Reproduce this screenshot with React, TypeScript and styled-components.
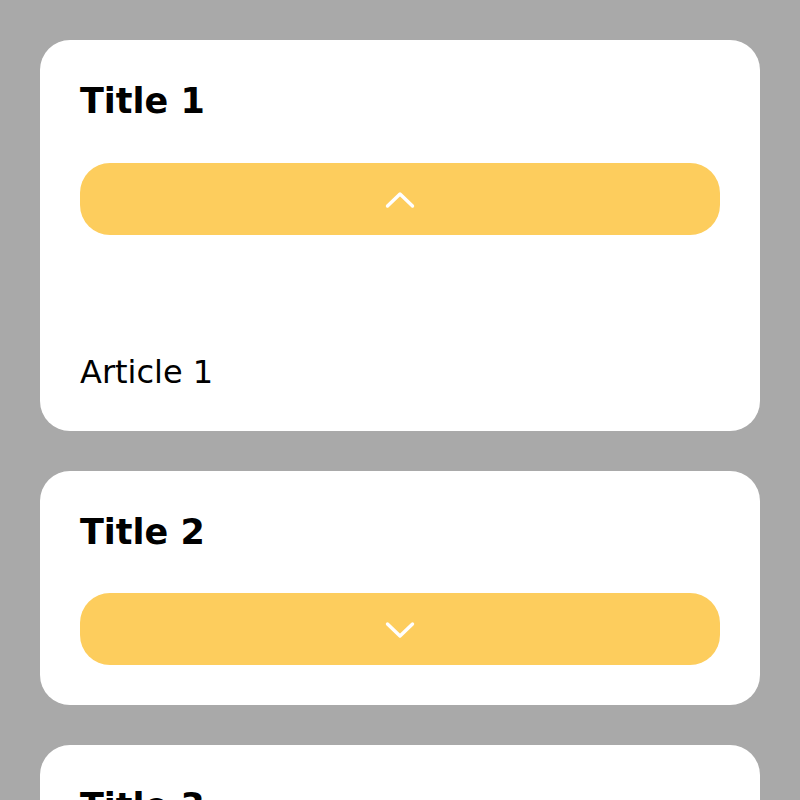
import React, { useState } from "react";
import styled, { createGlobalStyle } from "styled-components";

const Global = createGlobalStyle`
  html, body { margin: 0; padding: 0; background: #a9a9a9; }
  body { font-family: "DejaVu Sans", Verdana, sans-serif; }
`;

const List = styled.div`
  display: flex;
  flex-direction: column;
  gap: 40px;
  padding: 40px;
`;

const Card = styled.section`
  background: #ffffff;
  border-radius: 30px;
  padding: 40px;
  display: flex;
  flex-direction: column;
`;

const Title = styled.h2`
  margin: 0 0 40px;
  font-size: 35px;
  font-weight: bold;
  color: #000;
  line-height: 42.5px;
`;

const Toggle = styled.button`
  height: 72px;
  border: none;
  border-radius: 30px;
  background: #fdcd5d;
  display: flex;
  align-items: center;
  justify-content: center;
  cursor: pointer;
  padding: 0;
`;

const Article = styled.p`
  margin: 119px 0 0;
  font-size: 32px;
  line-height: 37px;
  color: #000;
`;

const Chevron = ({ up }: { up: boolean }) => (
  <svg width="32" height="20" viewBox="0 0 32 20" fill="none">
    <path
      d={up ? "M3.5 17 L16 5 L28.5 17" : "M3.5 5 L16 17 L28.5 5"}
      stroke="#fff"
      strokeWidth="3.4"
      strokeLinecap="round"
      strokeLinejoin="round"
    />
  </svg>
);

const items = [
  { title: "Title 1", body: "Article 1" },
  { title: "Title 2", body: "Article 2" },
  { title: "Title 3", body: "Article 3" },
];

export default function App() {
  const [open, setOpen] = useState<number | null>(0);
  return (
    <>
      <Global />
      <List>
        {items.map((it, i) => (
          <Card key={it.title}>
            <Title>{it.title}</Title>
            <Toggle onClick={() => setOpen(open === i ? null : i)} aria-label="toggle">
              <Chevron up={open === i} />
            </Toggle>
            {open === i && <Article>{it.body}</Article>}
          </Card>
        ))}
      </List>
    </>
  );
}
